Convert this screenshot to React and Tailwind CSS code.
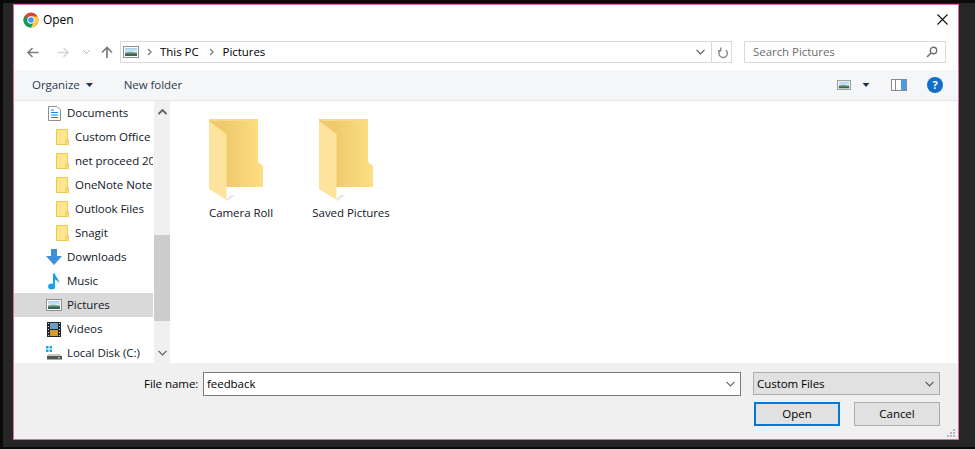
const FONT = { fontFamily: '"Open Sans", "Noto Sans", sans-serif' };

function Chrome({ s = 16 }) {
  return (
    <svg width={s} height={s} viewBox="0 0 16 16">
      <circle cx="8" cy="8" r="7.5" fill="#db4437" />
      <path d="M8 8 L1.5 4.2 A7.5 7.5 0 0 0 8 15.5 L11.8 9 Z" fill="#0f9d58" />
      <path d="M8 4.5 H14.6 A7.5 7.5 0 0 1 8 15.5 L11 9.5 Z" fill="#ffcd40" />
      <circle cx="8" cy="8" r="3.7" fill="#fff" />
      <circle cx="8" cy="8" r="2.8" fill="#4d8df5" />
    </svg>
  );
}

function Picture({ w = 16, h = 12 }) {
  return (
    <svg width={w} height={h} viewBox="0 0 16 12" preserveAspectRatio="none">
      <defs>
        <linearGradient id="sky" x1="0" x2="0" y1="0" y2="1">
          <stop offset="0" stopColor="#a9cfee" />
          <stop offset="1" stopColor="#dcecf6" />
        </linearGradient>
      </defs>
      <rect x="0.5" y="0.5" width="15" height="11" fill="#fff" stroke="#8f8f8f" />
      <rect x="2" y="2" width="12" height="4" fill="url(#sky)" />
      <path d="M2 6.5 C6 5 9 6 14 6.5 V8 H2 Z" fill="#7fa892" />
      <rect x="2" y="7.5" width="12" height="2.5" fill="#3a6656" />
    </svg>
  );
}

function SmallFolder() {
  return (
    <svg width="13" height="16" viewBox="0 0 13 16">
      <path d="M0.5 0.5 H11.5 V15.5 H0.5 Z" fill="#fde68f" stroke="#efc849" />
      <path d="M10 15.5 V11 H12.5 V15.5 Z" fill="#fde68f" stroke="#efc849" />
    </svg>
  );
}

function BigFolder() {
  return (
    <svg width="54" height="82" viewBox="0 0 54 82">
      <defs>
        <linearGradient id="fb" x1="0" x2="1" y1="0" y2="0">
          <stop offset="0.3" stopColor="#efca6c" />
          <stop offset="1" stopColor="#fde083" />
        </linearGradient>
      </defs>
      <path d="M0 0 H49 V43 L54 47 V68 H4 Z" fill="url(#fb)" />
      <path d="M0 0 H49 V2 H3 Z" fill="#f7da85" />
      <path d="M0 2 L17.5 15 V81 L0 70 Z" fill="#fde39c" />
      <path d="M17 81 L22 76 H26 L18 82 Z" fill="#e6e6e6" />
    </svg>
  );
}

function TreeRow({ icon, label, indent, selected }) {
  return (
    <div className={`flex h-6 items-center overflow-hidden whitespace-nowrap ${selected ? 'bg-[#d9d9d9]' : ''} ${indent ? 'pl-[42px]' : 'pl-[31px]'}`}>
      <span className={`flex shrink-0 items-center justify-center ${indent ? 'w-[13px] mr-[6px]' : 'w-[18px] mr-[4px]'}`}>{icon}</span>
      <span>{label}</span>
    </div>
  );
}

const Chev = ({ className = '', color = '#5a5a5a', w = 9 }) => (
  <svg className={className} width={w} height="6" viewBox="0 0 9 6">
    <path d="M0.5 0.8 L4.5 4.8 L8.5 0.8" fill="none" stroke={color} strokeWidth="1.2" />
  </svg>
);

const Crumb = ({ className = '' }) => (
  <svg className={className} width="5" height="8" viewBox="0 0 5 8">
    <path d="M1 1 L4 4 L1 7" fill="none" stroke="#808080" strokeWidth="1.4" />
  </svg>
);

export default function App() {
  return (
    <div className="flex h-[449px] w-[975px] flex-col overflow-hidden border-b-[2px] border-l-[3px] border-t-[3px] border-[#0a0a0a] bg-[#262626] pb-[7px] pl-[10px] pr-[16px] pt-[1px]">
      <div className="flex h-[436px] w-[946px] flex-col border border-[#d86aa6] bg-white text-[11.5px] tracking-[-0.05px] text-[#101828]" style={FONT}>
        {/* title */}
        <div className="flex h-[29px] shrink-0 items-center pl-[9px] pr-[10px]">
          <Chrome />
          <span className="ml-[4px] text-[12px] text-black">Open</span>
          <svg className="ml-auto" width="11" height="11" viewBox="0 0 11 11">
            <path d="M0.5 0.5 L10.5 10.5 M10.5 0.5 L0.5 10.5" stroke="#111" strokeWidth="1.1" />
          </svg>
        </div>
        {/* address */}
        <div className="mt-[7px] flex h-[22px] shrink-0 items-center">
          <svg className="ml-[13px]" width="12" height="11" viewBox="0 0 12 11">
            <path d="M11.5 5.5 H1.5 M5.5 1 L1 5.5 L5.5 10" fill="none" stroke="#7d7d7d" strokeWidth="1.6" />
          </svg>
          <svg className="ml-[18px]" width="12" height="11" viewBox="0 0 12 11">
            <path d="M0.5 5.5 H10.5 M6.5 1 L11 5.5 L6.5 10" fill="none" stroke="#d6d6d6" strokeWidth="1.6" />
          </svg>
          <Chev className="ml-[14px]" color="#a8a8a8" w={7} />
          <svg className="ml-[11px]" width="12" height="12" viewBox="0 0 12 12">
            <path d="M6 12 V1.5 M1 6.5 L6 1.5 L11 6.5" fill="none" stroke="#7d7d7d" strokeWidth="1.7" />
          </svg>
          <div className="ml-[7px] flex h-[22px] w-[612px] items-center border border-[#d9d9d9] pl-[2px]">
            <Picture />
            <Crumb className="ml-[8px]" />
            <span className="ml-[8px] text-black">This PC</span>
            <Crumb className="ml-[10px]" />
            <span className="ml-[9px] text-black">Pictures</span>
            <Chev className="ml-auto mr-[6px]" w={9} />
            <span className="flex h-full w-[20px] items-center justify-center border-l border-[#d9d9d9]">
              <svg width="12" height="13" viewBox="0 0 12 13">
                <path d="M9.5 3.5 A4.4 4.4 0 1 1 4 3 M4 0.5 V4 H1" fill="none" stroke="#8a8a8a" strokeWidth="1.5" transform="translate(1 1) scale(.95)" />
              </svg>
            </span>
          </div>
          <div className="ml-[12px] flex h-[22px] w-[202px] items-center justify-between border border-[#d9d9d9] pl-[8px] pr-[7px] text-[#6d6d6d]">
            <span>Search Pictures</span>
            <svg width="12" height="12" viewBox="0 0 12 12">
              <circle cx="7.5" cy="4.5" r="3.2" fill="none" stroke="#6f6f6f" strokeWidth="1.4" />
              <path d="M5 7 L1 11" stroke="#6f6f6f" strokeWidth="1.6" />
            </svg>
          </div>
        </div>
        {/* toolbar */}
        <div className="mt-[7px] flex h-[31px] shrink-0 items-center border-b border-[#e5e5e5] bg-[#f5f6f7] pr-[15px] text-[#2b3a55]">
          <span className="ml-[18px]">Organize</span>
          <svg className="ml-[6px]" width="7" height="4" viewBox="0 0 7 4"><path d="M0 0 H7 L3.5 4 Z" fill="#1f3355" /></svg>
          <span className="ml-[31px]">New folder</span>
          <span className="ml-auto flex"><Picture w={14} h={10} /></span>
          <svg className="ml-[11px]" width="8" height="4" viewBox="0 0 7 4"><path d="M0 0 H7 L3.5 4 Z" fill="#1f3355" /></svg>
          <svg className="ml-[21px]" width="16" height="12" viewBox="0 0 16 12">
            <rect x="0.5" y="0.5" width="15" height="11" fill="#fff" stroke="#8a8a8a" />
            <rect x="10" y="1" width="5" height="10" fill="#4a9ae6" />
            <rect x="4" y="1" width="1" height="10" fill="#8a8a8a" />
          </svg>
          <svg className="ml-[20px]" width="16" height="16" viewBox="0 0 16 16">
            <circle cx="8" cy="8" r="8" fill="#0f6fcb" />
            <text x="8" y="12" textAnchor="middle" fontSize="11" fontWeight="700" fill="#fff" fontFamily="Open Sans">?</text>
          </svg>
        </div>
        {/* main */}
        <div className="flex min-h-0 flex-1">
          <div className="w-[139px] shrink-0 overflow-hidden text-[#101828]">
            <TreeRow label="Documents" icon={
              <svg width="13" height="15" viewBox="0 0 13 15">
                <path d="M0.5 0.5 H9 L12.5 4 V14.5 H0.5 Z" fill="#fff" stroke="#8d8d8d" />
                <path d="M3 4 H6 M3 6.5 H10 M3 9 H10 M3 11.5 H10" stroke="#1f86dd" strokeWidth="1.1" />
              </svg>} />
            {['Custom Office', 'net proceed 20', 'OneNote Note', 'Outlook Files', 'Snagit'].map((t) => (
              <TreeRow key={t} indent label={t} icon={<SmallFolder />} />
            ))}
            <TreeRow label="Downloads" icon={
              <svg width="16" height="16" viewBox="0 0 16 16"><path d="M5 0 H11 V7 H16 L8 16 L0 7 H5 Z" fill="#3d8fdc" /></svg>} />
            <TreeRow label="Music" icon={
              <svg width="12" height="17" viewBox="0 0 12 17">
                <ellipse cx="3.6" cy="13.6" rx="3.5" ry="3" fill="#17a0ee" />
                <path d="M5 14 V0.5 H7 C7.2 4 11.5 5.5 11 11 C10.3 8.5 9 7.2 7 6.5 V14 Z" fill="#17a0ee" />
              </svg>} />
            <TreeRow selected label="Pictures" icon={<Picture />} />
            <TreeRow label="Videos" icon={
              <svg width="14" height="15" viewBox="0 0 14 15">
                <rect width="14" height="15" fill="#20262b" />
                <rect x="3" y="1" width="8" height="6" fill="#6a9fc8" />
                <rect x="3" y="8" width="8" height="6" fill="#d69b2b" />
                <path d="M1 1.5 H2 M1 4.5 H2 M1 7.5 H2 M1 10.5 H2 M1 13.5 H2 M12 1.5 H13 M12 4.5 H13 M12 7.5 H13 M12 10.5 H13 M12 13.5 H13" stroke="#ddd" />
              </svg>} />
            <TreeRow label="Local Disk (C:)" icon={
              <svg width="16" height="14" viewBox="0 0 16 14">
                <rect x="0" y="0" width="2.5" height="2.5" fill="#1aa3ea" />
                <rect x="3.5" y="0" width="2.5" height="2.5" fill="#1aa3ea" />
                <rect x="0" y="3.5" width="2.5" height="2.5" fill="#1aa3ea" />
                <rect x="3.5" y="3.5" width="2.5" height="2.5" fill="#1aa3ea" />
                <path d="M2 8 H14 L15.5 10 H1 Z" fill="#c9c9c9" />
                <rect x="1" y="10" width="15" height="3.5" fill="#555" />
                <rect x="12" y="11" width="2" height="1.5" fill="#6fe06f" />
              </svg>} />
          </div>
          <div className="flex w-[17px] shrink-0 flex-col items-center border-l border-[#fff] bg-[#f0f0f0]">
            <svg className="mt-[8px]" width="9" height="6" viewBox="0 0 9 6"><path d="M0.5 5 L4.5 1 L8.5 5" fill="none" stroke="#5d5d5d" strokeWidth="1.8" /></svg>
            <div className="mt-[120px] h-[86px] w-full bg-[#cdcdcd]" />
            <Chev className="mt-[29px]" color="#5d5d5d" />
          </div>
          <div className="flex min-w-0 flex-1 items-start bg-white pl-[16px] pt-[18px] text-[#101828]">
            {['Camera Roll', 'Saved Pictures'].map((t) => (
              <div key={t} className="flex w-[110px] flex-col items-center">
                <span className="mr-[10px] flex"><BigFolder /></span>
                <span className="mt-[3px] whitespace-nowrap">{t}</span>
              </div>
            ))}
          </div>
        </div>
        {/* footer */}
        <div className="relative h-[76px] shrink-0 bg-[#f0f0f0] pt-[9px]">
          <div className="flex items-center">
            <span className="ml-[130px] w-[59px] text-black">File name:</span>
            <div className="flex h-6 w-[538px] items-center border border-[#7a7a7a] bg-white pl-[3px] text-black">
              feedback
              <Chev className="ml-auto mr-[5px]" color="#666" />
            </div>
            <div className="ml-[12px] flex h-[23px] w-[187px] items-center self-start border border-[#adadad] bg-[#e1e1e1] pl-[3px] pr-[5px] text-black">
              Custom Files
              <Chev className="ml-auto" color="#555" />
            </div>
          </div>
          <div className="mt-[6px] flex justify-end pr-[18px] text-black">
            <button className="flex h-6 w-[86px] items-center justify-center border-2 border-[#0078d7] bg-[#e1e1e1]">Open</button>
            <button className="ml-[14px] flex h-6 w-[86px] items-center justify-center border border-[#adadad] bg-[#e1e1e1]">Cancel</button>
          </div>
          <svg className="absolute bottom-[2px] right-[3px]" width="8" height="8" viewBox="0 0 8 8" fill="#b8b8b8">
            <rect x="6" y="0" width="2" height="2" />
            <rect x="3" y="3" width="2" height="2" /><rect x="6" y="3" width="2" height="2" />
            <rect x="0" y="6" width="2" height="2" /><rect x="3" y="6" width="2" height="2" /><rect x="6" y="6" width="2" height="2" />
          </svg>
        </div>
      </div>
    </div>
  );
}
